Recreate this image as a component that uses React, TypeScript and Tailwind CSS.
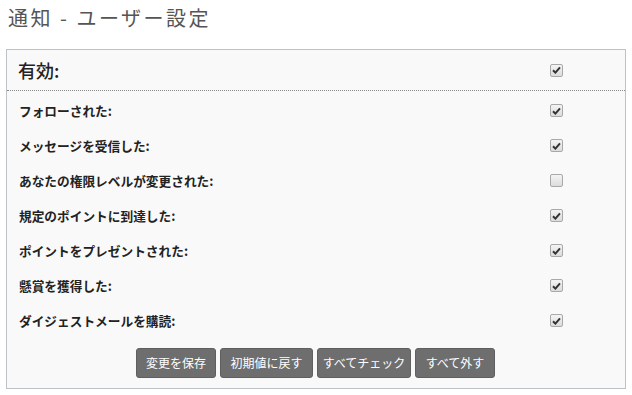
import React from "react";

const rows: { label: string; checked: boolean }[] = [
  { label: "フォローされた:", checked: true },
  { label: "メッセージを受信した:", checked: true },
  { label: "あなたの権限レベルが変更された:", checked: false },
  { label: "規定のポイントに到達した:", checked: true },
  { label: "ポイントをプレゼントされた:", checked: true },
  { label: "懸賞を獲得した:", checked: true },
  { label: "ダイジェストメールを購読:", checked: true },
];

const buttons: { label: string; w: string }[] = [
  { label: "変更を保存", w: "w-[80px]" },
  { label: "初期値に戻す", w: "w-[93px]" },
  { label: "すべてチェック", w: "w-[94px]" },
  { label: "すべて外す", w: "w-[80px]" },
];

function Box({ checked }: { checked: boolean }) {
  return (
    <span className="flex h-[13px] w-[13px] items-center justify-center rounded-[2px] border border-[#a9a9a9] bg-gradient-to-b from-[#f4f4f4] to-[#dcdcdc]">
      {checked && (
        <svg width="9" height="8" viewBox="0 0 9 8">
          <path d="M1 4.2 L3.4 6.6 L8 1.4" fill="none" stroke="#333" strokeWidth="2" />
        </svg>
      )}
    </span>
  );
}

export default function App() {
  const font = { fontFamily: '"Noto Sans CJK JP", "Liberation Sans", sans-serif' };
  return (
    <div className="h-[395px] w-[632px] bg-white" style={font}>
      <h1 className="pl-[8px] pt-[5px] text-[20px] leading-[26px] tracking-[2.5px] text-[#555]">
        通知 - ユーザー設定
      </h1>
      <div className="mx-[6px] mt-[18px] h-[340px] w-[620px] border border-[#bcc2c6] bg-[#f9f9f9]">
        <div className="flex h-[41px] items-center border-b border-dotted border-[#888] pl-[11px] pr-[62px]">
          <span className="flex-1 text-[18px] font-medium text-[#222]">有効:</span>
          <Box checked />
        </div>
        <div className="pt-[2px]">
          {rows.map((r) => (
            <div key={r.label} className="flex h-[35px] items-center pl-[12px] pr-[62px]">
              <span className="flex-1 text-[12.7px] font-bold text-[#222]">{r.label}</span>
              <Box checked={r.checked} />
            </div>
          ))}
        </div>
        <div className="mt-[10px] flex justify-center gap-[4px] pr-[1px]">
          {buttons.map((b) => (
            <button
              key={b.label}
              className={`${b.w} h-[30px] rounded-[3px] border border-[#5f5f5f] bg-[#6e6e6e] text-[12px] whitespace-nowrap text-white`}
            >
              {b.label}
            </button>
          ))}
        </div>
      </div>
    </div>
  );
}
